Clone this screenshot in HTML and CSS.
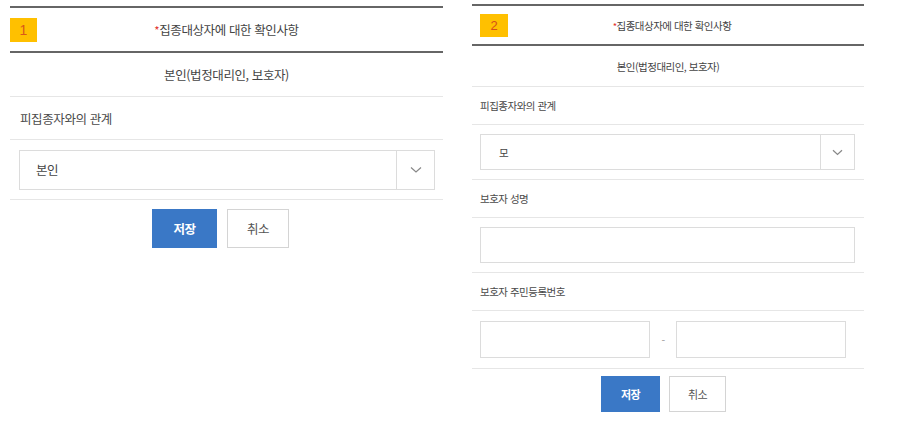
FILE: index.html
```html
<!DOCTYPE html>
<html lang="ko">
<head>
<meta charset="utf-8">
<link rel="stylesheet" href="styles.css">
</head>
<body>
<div class="page">
  <section class="panel panel-a">
    <div class="head">
      <span class="badge">1</span>
      <span class="head-title"><span class="req">*</span>집종대상자에 대한 확인사항</span>
      <span></span>
    </div>
    <div class="row title-row">본인(법정대리인, 보호자)</div>
    <div class="row label-row">피집종자와의 관계</div>
    <div class="row field-row">
      <div class="select">
        <span class="select-value">본인</span>
        <span class="select-arrow"><svg width="12" height="8" viewBox="0 0 12 8"><path d="M1 1.5 L6 6 L11 1.5" fill="none" stroke="#888" stroke-width="1.2"/></svg></span>
      </div>
    </div>
    <div class="actions">
      <button class="btn btn-save">저장</button>
      <button class="btn btn-cancel">취소</button>
    </div>
  </section>

  <section class="panel panel-b">
    <div class="head">
      <span class="badge">2</span>
      <span class="head-title"><span class="req">*</span>집종대상자에 대한 확인사항</span>
      <span></span>
    </div>
    <div class="row title-row">본인(법정대리인, 보호자)</div>
    <div class="row label-row">피집종자와의 관계</div>
    <div class="row field-row">
      <div class="select">
        <span class="select-value">모</span>
        <span class="select-arrow"><svg width="11" height="7" viewBox="0 0 11 7"><path d="M1 1.2 L5.5 5.5 L10 1.2" fill="none" stroke="#888" stroke-width="1.2"/></svg></span>
      </div>
    </div>
    <div class="row label-row">보호자 성명</div>
    <div class="row field-row">
      <div class="input input-full"></div>
    </div>
    <div class="row label-row">보호자 주민등록번호</div>
    <div class="row field-row split">
      <div class="input input-half"></div>
      <span class="dash">-</span>
      <div class="input input-half"></div>
    </div>
    <div class="actions">
      <button class="btn btn-save">저장</button>
      <button class="btn btn-cancel">취소</button>
    </div>
  </section>
</div>
</body>
</html>
```
FILE: styles.css
```css
* { box-sizing: border-box; }
html, body { margin: 0; padding: 0; background: #fff; }
body {
  font-family: "Noto Sans CJK KR", "Noto Sans", sans-serif;
  color: #4a4a4a;
}
.page {
  display: flex;
  align-items: flex-start;
  padding-left: 10px;
  gap: 29px;
}
.panel { display: flex; flex-direction: column; }
.panel-a { width: 433px; padding-top: 6px; font-size: 12.5px; letter-spacing: -0.4px; }
.panel-b { width: 392px; padding-top: 4px; font-size: 10.5px; letter-spacing: -0.5px; }

.head {
  display: grid;
  grid-template-columns: 1fr auto 1fr;
  align-items: center;
  border-top: 2px solid #666;
  border-bottom: 2px solid #666;
}
.panel-a .head { height: 47px; }
.panel-b .head { height: 42px; padding-left: 8px; }
.badge {
  justify-self: start;
  background: #ffc000;
  color: #d9581a;
  display: flex;
  align-items: center;
  justify-content: center;
  font-family: "Liberation Sans", sans-serif;
  letter-spacing: 0;
}
.panel-a .badge { width: 27px; height: 24px; font-size: 14px; }
.panel-b .badge { width: 28px; height: 23px; font-size: 13px; margin-top: 1px; color: #d4501a; }
.head-title { color: #444; }
.req { color: #e0312b; font-size: 0.9em; }

.row {
  border-bottom: 1px solid #e6e6e6;
  display: flex;
  align-items: center;
}
.title-row { justify-content: center; color: #444; }
.panel-a .title-row { height: 44px; }
.panel-b .title-row { height: 41px; }
.panel-a .label-row { height: 43px; padding-left: 10px; }
.panel-b .label-row { height: 38px; padding-left: 8px; }

.panel-a .field-row { height: 60px; padding: 0 8px 0 9px; }
.panel-b .field-row { height: 55px; padding: 0 9px 0 8px; }
.panel-b .field-row.split { height: 58px; }

.select {
  flex: 1;
  display: flex;
  border: 1px solid #dcdcdc;
  background: #fff;
}
.panel-a .select { height: 40px; }
.panel-b .select { height: 36px; }
.select-value { flex: 1; display: flex; align-items: center; color: #444; }
.panel-a .select-value { padding-left: 16px; }
.panel-b .select-value { padding-left: 18px; }
.select-arrow {
  border-left: 1px solid #dcdcdc;
  display: flex;
  align-items: center;
  justify-content: center;
}
.panel-a .select-arrow { width: 38px; }
.panel-b .select-arrow { width: 34px; }

.input { border: 1px solid #dcdcdc; height: 36px; background: #fff; }
.input-full { flex: 1; }
.input-half { width: 170px; height: 37px; }
.dash { width: 26px; text-align: center; color: #999; }

.actions { display: flex; justify-content: center; gap: 10px; }
.panel-a .actions { padding-top: 9px; padding-right: 12px; }
.panel-b .actions { padding-top: 7px; padding-right: 9px; gap: 9px; }
.btn {
  font-family: inherit;
  letter-spacing: -0.5px;
  border: 1px solid #d4d4d4;
  background: #fff;
  color: #555;
  padding: 0;
  margin: 0;
}
.btn-save { background: #3a78c6; border-color: #3a78c6; color: #fff; font-weight: bold; }
.panel-a .btn { height: 39px; font-size: 12.5px; }
.panel-a .btn-save { width: 65px; }
.panel-a .btn-cancel { width: 62px; }
.panel-b .btn { height: 36px; font-size: 11px; }
.panel-b .btn-save { width: 59px; }
.panel-b .btn-cancel { width: 57px; }
```
